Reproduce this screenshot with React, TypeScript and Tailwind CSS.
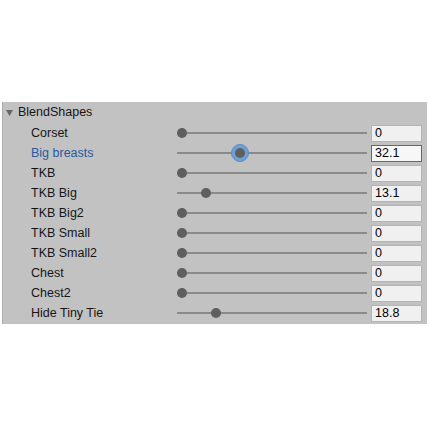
import React from 'react'

interface BlendShape {
  name: string;
  value: number;
  text: string;
  active?: boolean;
}

const shapes: BlendShape[] = [
  { name: 'Corset', value: 0, text: '0' },
  { name: 'Big breasts', value: 32.1, text: '32.1', active: true },
  { name: 'TKB', value: 0, text: '0' },
  { name: 'TKB Big', value: 13.1, text: '13.1' },
  { name: 'TKB Big2', value: 0, text: '0' },
  { name: 'TKB Small', value: 0, text: '0' },
  { name: 'TKB Small2', value: 0, text: '0' },
  { name: 'Chest', value: 0, text: '0' },
  { name: 'Chest2', value: 0, text: '0' },
  { name: 'Hide Tiny Tie', value: 18.8, text: '18.8' },
]

const Slider: React.FC<{ value: number; active?: boolean }> = ({ value, active }) => {
  // knob centre travels 5px .. 186px across the 190px track
  const center = 5 + value * 1.81
  return (
    <div className="relative w-[190px] h-full flex items-center">
      <div className="w-full h-[2px] bg-[#8a8a8a]" />
      {active && (
        <div
          className="absolute top-[1px] w-[18px] h-[18px] rounded-full bg-[#6f9fd3] border border-[#5a8cc4]"
          style={{ left: center - 9 }}
        />
      )}
      <div
        className="absolute top-[5px] w-[10px] h-[10px] rounded-full bg-[#5f5f5f]"
        style={{ left: center - 5 }}
      />
    </div>
  )
}

const Row: React.FC<{ shape: BlendShape }> = ({ shape }) => {
  return (
    <div className="flex items-center gap-[4px] h-[20px] pl-[28px]">
      <div className={`w-[142px] ${shape.active ? 'text-[#2a5a9c]' : 'text-[#161616]'}`}>
        {shape.name}
      </div>
      <Slider value={shape.value} active={shape.active} />
      <div
        className={`w-[51px] h-[17px] flex items-center px-[3px] ${
          shape.active
            ? 'bg-[#f7f7f7] border border-[#3d6fa8]'
            : 'bg-[#f0f0f0] border border-[#b4b4b4]'
        }`}
      >
        {shape.text}
      </div>
    </div>
  )
}

export default function App() {
  return (
    <div
      className="w-[430px] h-[430px] bg-white pt-[102px] pl-[2px] text-[12.5px] leading-none"
      style={{ fontFamily: '"Liberation Sans", Arial, sans-serif' }}
    >
      <div className="w-[425px] bg-[#c2c2c2] border-l border-[#ababab] pb-[1px]">
        <div className="flex items-center gap-[5px] h-[21px] pl-[3px] text-[#161616]">
          <svg width="7" height="6" viewBox="0 0 7 6">
            <polygon points="0,0 7,0 3.5,6" fill="#666666" />
          </svg>
          BlendShapes
        </div>
        {shapes.map((s) => (
          <Row key={s.name} shape={s} />
        ))}
      </div>
    </div>
  )
}
